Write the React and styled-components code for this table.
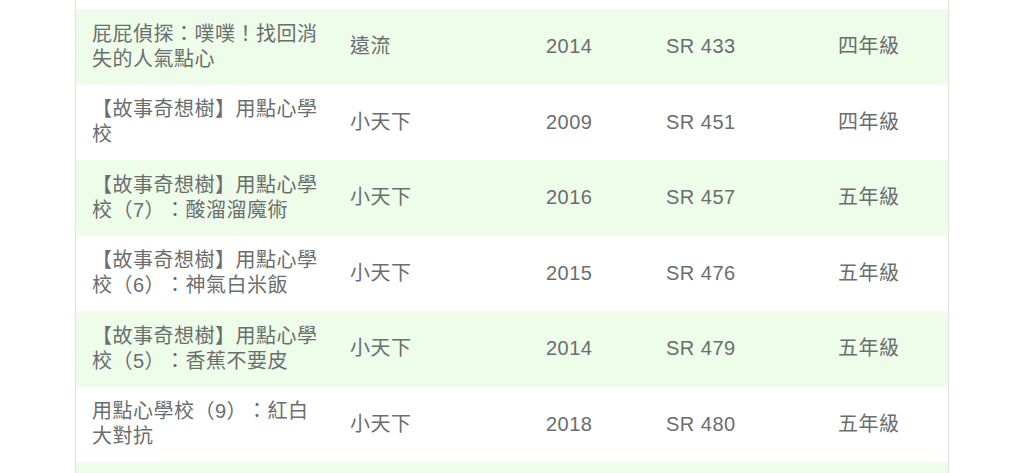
import React from "react";
import styled, { createGlobalStyle } from "styled-components";

const Global = createGlobalStyle`
  html, body {
    margin: 0;
    padding: 0;
    background: #ffffff;
    overflow: hidden;
  }
  body {
    font-family: "Liberation Sans", "Noto Sans CJK TC", sans-serif;
  }
`;

const Page = styled.div`
  width: 1024px;
  height: 473px;
  overflow: hidden;
`;

const Table = styled.div`
  width: 872px;
  margin: 0 auto;
  padding-top: 9px;
  border-left: 1px solid #e3e3e3;
  border-right: 1px solid #e3e3e3;
  display: flex;
  flex-direction: column;
`;

const Row = styled.div`
  display: grid;
  grid-template-columns: 258px 196px 120px 172px 126px;
  min-height: 75.5px;
  background: ${(p) => (p.$alt ? "#eefcea" : "#ffffff")};
`;

const Cell = styled.div`
  display: flex;
  align-items: center;
  padding: 12.75px 16px;
  font-size: 20px;
  line-height: 25px;
  letter-spacing: 0.5px;
  color: #6a6e6e;
  box-sizing: border-box;
  text-spacing-trim: space-all;
`;

const rows = [
  ["屁屁偵探：噗噗！找回消失的人氣點心", "遠流", "2014", "SR 433", "四年級"],
  ["【故事奇想樹】用點心學校", "小天下", "2009", "SR 451", "四年級"],
  ["【故事奇想樹】用點心學校（7）：酸溜溜魔術", "小天下", "2016", "SR 457", "五年級"],
  ["【故事奇想樹】用點心學校（6）：神氣白米飯", "小天下", "2015", "SR 476", "五年級"],
  ["【故事奇想樹】用點心學校（5）：香蕉不要皮", "小天下", "2014", "SR 479", "五年級"],
  ["用點心學校（9）：紅白大對抗", "小天下", "2018", "SR 480", "五年級"],
];

export default function App() {
  return (
    <>
      <Global />
      <Page>
        <Table>
          {rows.map((r, i) => (
            <Row key={i} $alt={i % 2 === 0}>
              {r.map((c, j) => (
                <Cell key={j}>{c}</Cell>
              ))}
            </Row>
          ))}
          <Row $alt>
            <Cell />
          </Row>
        </Table>
      </Page>
    </>
  );
}
